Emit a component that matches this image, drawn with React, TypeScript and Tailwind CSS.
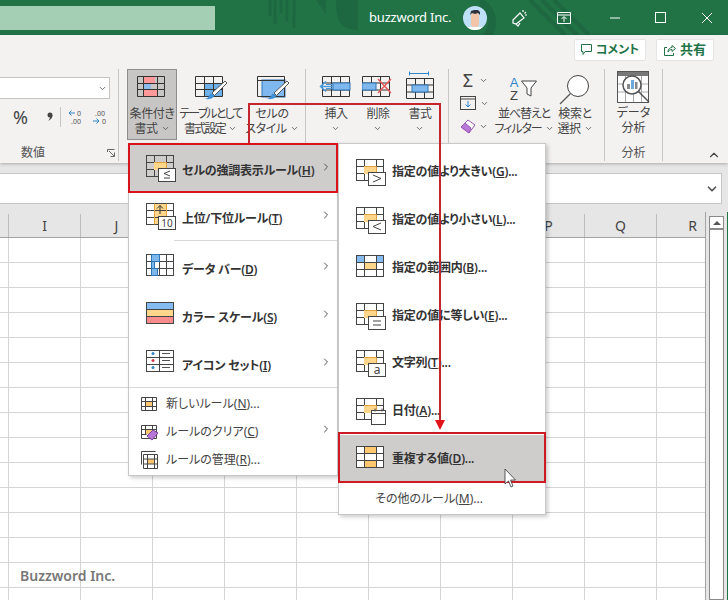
import { ReactNode } from 'react';
import { ChevronDown, ChevronRight, ChevronUp } from 'lucide-react';

const columns = ['', 'I', 'J', '', '', '', '', '', 'P', 'Q', 'R', ''];

function Chev({ className = '' }: { className?: string }) {
  return <ChevronDown className={`w-[9px] h-[9px] text-[#444] shrink-0 ${className}`} strokeWidth={2} />;
}

// grid used by the conditional formatting menu icons
function GridBase({ children }: { children?: ReactNode }) {
  return (
    <svg width={32} height={28} viewBox="0 0 32 28" className="shrink-0 relative top-[1px]">
      {children}
    </svg>
  );
}

function Lines({ cols = [8, 20], rows = [7, 14] }: { cols?: number[]; rows?: number[] }) {
  return (
    <g stroke="#444" strokeWidth="1" fill="none" shapeRendering="crispEdges">
      <rect x="0.5" y="0.5" width={27} height={21} />
      {cols.map((x) => (
        <line key={x} x1={x + 0.5} y1="0" x2={x + 0.5} y2={21} />
      ))}
      {rows.map((y) => (
        <line key={y} x1="0" y1={y + 0.5} x2={27} y2={y + 0.5} />
      ))}
    </g>
  );
}

function Badge({ children }: { children: ReactNode }) {
  return (
    <g>
      <rect x="12.5" y="13.5" width="17" height="13" fill="#fff" stroke="#444" />
      {children}
    </g>
  );
}

function Highlight() {
  return <rect x="8" y="7" width="12" height="8" fill="#ffd68a" />;
}

function IconLess() {
  return (
    <GridBase>
      <Lines />
      <Highlight />
      <path d="M8.500 7.500h12v7" stroke="#e0a040" fill="none" />
      <Badge>
        <path d="M24 16l-6 2.500 6 2.500M18 23h6" stroke="#444" fill="none" />
      </Badge>
    </GridBase>
  );
}

function IconTop() {
  return (
    <GridBase>
      <rect x="8" y="0" width="12" height="21" fill="#ffd68a" />
      <Lines />
      <path d="M8.500 .5v21M20.500 .5v21" stroke="#e0a040" />
      <path d="M14 11V2.500M11 5.500l3-3 3 3" stroke="#333" fill="none" />
      <Badge>
        <text x="21" y="24" textAnchor="middle" fontSize="10" fill="#444">
          10
        </text>
      </Badge>
    </GridBase>
  );
}

function IconBar() {
  return (
    <GridBase>
      <Lines cols={[5, 13, 20]} />
      <rect x="5.500" y=".5" width="8" height="7" fill="#7db7ec" stroke="#2e75b6" />
      <rect x="5.500" y="7.500" width="3" height="7" fill="#7db7ec" stroke="#2e75b6" />
      <rect x="5.500" y="14.500" width="6" height="7" fill="#7db7ec" stroke="#2e75b6" />
    </GridBase>
  );
}

function IconScale() {
  return (
    <GridBase>
      <rect x="0" y="0" width="27" height="7" fill="#84bbf0" />
      <rect x="0" y="7" width="27" height="7" fill="#ffd68a" />
      <rect x="0" y="14" width="27" height="7" fill="#f98c8c" />
      <Lines cols={[]} />
    </GridBase>
  );
}

function IconSet() {
  return (
    <GridBase>
      <Lines cols={[13]} />
      <circle cx="7" cy="3.500" r="1.500" fill="#2e86c8" />
      <circle cx="7" cy="10.500" r="1.500" fill="#d8394a" />
      <circle cx="7" cy="17.500" r="1.500" fill="#2e86c8" />
      <path d="M16 3.500h8M16 10.500h8M16 17.500h8" stroke="#555" />
    </GridBase>
  );
}

function IconValue({ kind }: { kind: 'gt' | 'lt' | 'eq' | 'a' | 'date' }) {
  return (
    <GridBase>
      <Lines />
      <Highlight />
      <path d="M8.500 7.500h12v7" stroke="#e0a040" fill="none" />
      {kind === 'date' ? (
        <g>
          <rect x="15.500" y="12.500" width="14" height="14" fill="#fff" stroke="#444" />
          <path d="M15.500 15.500h14M19 10.500v3M26 10.500v3" stroke="#444" fill="none" />
        </g>
      ) : (
        <Badge>
          {kind === 'gt' && <path d="M17 16l8 3.500-8 3.500" stroke="#444" fill="none" />}
          {kind === 'lt' && <path d="M25 16l-8 3.500 8 3.500" stroke="#444" fill="none" />}
          {kind === 'eq' && <path d="M17 18h8M17 22h8" stroke="#444" fill="none" />}
          {kind === 'a' && (
            <text x="21" y="24" textAnchor="middle" fontSize="12" fill="#444">
              a
            </text>
          )}
        </Badge>
      )}
    </GridBase>
  );
}

function IconRange() {
  return (
    <GridBase>
      <rect x="0" y="0" width="8" height="7" fill="#84bbf0" />
      <rect x="20" y="0" width="8" height="7" fill="#84bbf0" />
      <rect x="8" y="7" width="12" height="7" fill="#ffd68a" />
      <Lines />
    </GridBase>
  );
}

function IconDup() {
  return (
    <GridBase>
      <rect x="0.5" y="0.5" width="27" height="21" fill="#fff" />
      <rect x="8" y="0" width="12" height="7" fill="#ffc870" />
      <rect x="8" y="14" width="12" height="7" fill="#ffc870" />
      <Lines />
    </GridBase>
  );
}

function SmallGrid({ children }: { children?: ReactNode }) {
  return (
    <svg width="18" height="18" viewBox="0 0 18 18" className="shrink-0">
      {children}
    </svg>
  );
}

function SmallNew() {
  return (
    <SmallGrid>
      <rect x="5" y="6" width="6" height="6" fill="#ffc870" />
      <path d="M.5 2.500h15v13H.5zM4.500 2.500v13M11.500 2.500v13M.5 6.500h15M.5 11.500h15" stroke="#444" fill="none" />
    </SmallGrid>
  );
}

function SmallClear() {
  return (
    <SmallGrid>
      <rect x="5" y="6" width="6" height="5" fill="#ffc870" />
      <path d="M.5 2.500h15v13H.5zM4.500 2.500v9M11.500 2.500v4M.5 6.500h15M.5 11.500h5" stroke="#444" fill="none" />
      <path d="M6 13l6-6 5 3-6 7z" fill="#b878d8" stroke="#7a3f9e" />
    </SmallGrid>
  );
}

function SmallManage() {
  return (
    <SmallGrid>
      <rect x="7" y="8" width="6" height="5" fill="#ffc870" />
      <path d="M.5 .5h14M.5 .5v13" stroke="#444" fill="none" />
      <path d="M2.500 3.500h14v14h-14zM6.500 3.500v14M13.500 3.500v14M2.500 8h14M2.500 13h14" stroke="#444" fill="none" />
    </SmallGrid>
  );
}

function Brush() {
  return (
    <g>
      <path d="M30 6L17 18l2.500 2.500L32 8z" fill="#fff" stroke="#555" />
      <path d="M16 18.500c-2 1-2 3-3 4-1 1-3 1-4 1 2 1 7 1 9-1 1-1 1.500-2 1-2.500z" fill="#3f8fd6" />
    </g>
  );
}

function IconConditional() {
  return (
    <svg width="30" height="24" viewBox="0 0 30 24">
      <rect x="6" y="1" width="12" height="7" fill="#f99" />
      <rect x="6" y="8" width="8" height="7" fill="#8cbcec" />
      <rect x="6" y="15" width="14" height="7" fill="#f99" />
      <path d="M.5 1.500h27v20H.5zM6.500 1.500v20M20.500 1.500v20M.5 8.500h27M.5 14.500h27" stroke="#333" fill="none" />
    </svg>
  );
}

function IconTable() {
  return (
    <svg width="34" height="28" viewBox="0 0 34 28">
      <rect x="9" y="8" width="18" height="13" fill="#6fb0e8" />
      <path d="M.5 1.500h27v20H.5zM9.500 1.500v20M18.500 1.500v20M.5 8.500h27M.5 14.500h27" stroke="#333" fill="none" />
      <Brush />
    </svg>
  );
}

function IconCellStyle() {
  return (
    <svg width="34" height="28" viewBox="0 0 34 28">
      <rect x="5" y="5" width="23" height="17" fill="#7fb8ee" stroke="#2e75b6" />
      <path d="M.5 1.500h27v20H.5zM.5 5.500h27" stroke="#333" fill="none" />
      <Brush />
    </svg>
  );
}

function IconInsert() {
  return (
    <svg width="34" height="22" viewBox="0 0 34 22">
      <path d="M3.500 .5h27v20h-27zM12.500 .5v20M21.500 .5v20M3.500 7h27M3.500 14h27" stroke="#333" fill="none" />
      <rect x="14" y="7" width="17" height="7" fill="#7fb8ee" stroke="#2e75b6" />
      <path d="M14 10.500H2M7 5.500l-5.500 5 5.500 5" stroke="#4a9adf" strokeWidth="1.500" fill="none" />
      <path d="M7 8.500h7M7 12.500h7" stroke="#4a9adf" />
    </svg>
  );
}

function IconDelete() {
  return (
    <svg width="32" height="22" viewBox="0 0 32 22">
      <path d="M.5 .5h27v20H.5zM9.500 .5v20M18.500 .5v20M.5 7h27M.5 14h27" stroke="#333" fill="none" />
      <rect x="0" y="7" width="14" height="7" fill="#7fb8ee" stroke="#2e75b6" />
      <path d="M16 3l13 14M29 3L16 17" stroke="#e85a5a" strokeWidth="1.500" fill="none" />
    </svg>
  );
}

function IconFormat() {
  return (
    <svg width="30" height="28" viewBox="0 0 30 28">
      <path d="M4.500 2.500h19M4.500 .5v4M23.500 .5v4" stroke="#2e86c8" fill="none" />
      <path d="M1.500 7.500h27v20h-27zM10.500 7.500v20M19.500 7.500v20M1.500 14h27M1.500 21h27" stroke="#333" fill="none" />
      <rect x="7" y="14" width="16" height="7" fill="#7fb8ee" stroke="#2e75b6" />
    </svg>
  );
}

function IconSort() {
  return (
    <svg width="32" height="26" viewBox="0 0 32 26">
      <text x="6" y="12" textAnchor="middle" fontSize="13" fill="#2e86c8" fontFamily="Liberation Sans">
        A
      </text>
      <text x="6" y="25" textAnchor="middle" fontSize="13" fill="#444" fontFamily="Liberation Sans">
        Z
      </text>
      <path d="M13.500 6h15l-5.500 7v8l-4 -2v-6z" fill="#fff" stroke="#444" />
    </svg>
  );
}

function IconSearch() {
  return (
    <svg width="32" height="30" viewBox="0 0 32 30">
      <circle cx="19" cy="11" r="10.500" fill="#fff" stroke="#444" />
      <path d="M11.500 18.500L1 29" stroke="#555" strokeWidth="1.300" />
    </svg>
  );
}

function IconAnalyze() {
  return (
    <svg width="34" height="34" viewBox="0 0 34 34">
      <rect x=".5" y=".5" width="31" height="31" fill="#fff" stroke="#555" />
      <rect x="1" y="1" width="30" height="4" fill="#777" />
      <path d="M8.500 5v26M16.500 5v26M24.500 5v26M1 13h30M1 21h30" stroke="#aaa" />
      <circle cx="15" cy="14" r="9" fill="#fff" stroke="#555" strokeWidth="1.500" />
      <rect x="10" y="13" width="3" height="5" fill="#888" />
      <rect x="14" y="9" width="3" height="9" fill="#6fa8dc" />
      <rect x="18" y="11" width="2.500" height="7" fill="#888" />
      <path d="M21 20l11 11" stroke="#555" strokeWidth="1.500" />
    </svg>
  );
}

function RibbonButton({
  width,
  icon,
  lines,
  chevOwnLine,
  active,
  tracking = 'tracking-[-0.4px]',
}: {
  width: string;
  icon: ReactNode;
  lines: string[];
  chevOwnLine?: boolean;
  active?: boolean;
  tracking?: string;
}) {
  return (
    <div
      className={`${width} h-[71px] flex flex-col items-center border ${
        active ? 'bg-[#c8c6c4] border-[#8e8e8e]' : 'border-transparent'
      }`}
    >
      <div className="h-[36px] pt-[5px] flex items-start justify-center">{icon}</div>
      <div className={`text-[12px] leading-[15px] text-[#444] text-center whitespace-nowrap ${tracking}`}>
        <div>{lines[0]}</div>
        {chevOwnLine ? (
          <div className="flex justify-center h-[15px] items-center">
            <Chev />
          </div>
        ) : (
          <div className="flex justify-center items-center gap-[3px]">
            {lines[1]}
            <Chev />
          </div>
        )}
      </div>
    </div>
  );
}

function GroupLabel({ children }: { children: ReactNode }) {
  return <div className="text-[12px] leading-[16px] text-[#555] text-center">{children}</div>;
}

function MenuRow({
  icon,
  label,
  accel,
  tail = '',
  arrow,
  selected,
  textTop = 'top-[3px]',
}: {
  icon: ReactNode;
  label: string;
  accel: string;
  tail?: string;
  arrow?: boolean;
  selected?: boolean;
  textTop?: string;
}) {
  return (
    <div className={`h-[48px] pl-[17px] gap-[4px] flex items-center relative ${selected ? 'bg-[#cfcdcc]' : ''}`}>
      {icon}
      <span className={`relative ${textTop} text-[12px] font-semibold tracking-[-0.2px] text-[#333] whitespace-nowrap`}>
        {label}(<span className="underline">{accel}</span>){tail}
      </span>
      {arrow && <ChevronRight className="absolute right-[5px] top-[17px] w-[12px] h-[12px] text-[#555]" />}
    </div>
  );
}

function MenuRowSmall({
  icon,
  label,
  accel,
  tail = '',
  arrow,
}: {
  icon: ReactNode;
  label: string;
  accel: string;
  tail?: string;
  arrow?: boolean;
}) {
  return (
    <div className="h-[28px] pl-[12px] gap-[7px] flex items-center relative">
      {icon}
      <span className="text-[12px] text-[#444] whitespace-nowrap">
        {label}(<span className="underline">{accel}</span>){tail}
      </span>
      {arrow && <ChevronRight className="absolute right-[5px] top-[5px] w-[12px] h-[12px] text-[#555]" />}
    </div>
  );
}

export default function App() {
  return (
    <div className="w-[728px] h-[600px] relative overflow-hidden bg-[#e6e6e6] [font-family:'Noto_Sans','Noto_Sans_CJK_JP',sans-serif] [font-feature-settings:'palt']">
      {/* Title bar */}
      <header className="h-[35px] bg-[#217346] relative flex items-center text-white">
        <svg width="100" height="35" viewBox="0 0 100 35" className="absolute left-[268px] top-0">
          <path d="M2 0v16M7 0v24M13 0v14M19 0v22M26 0v28" stroke="#1d6840" strokeWidth="3" />
          <path d="M48 0l10 14V0zM68 0c0 20 4 30 22 30V0z" fill="#1d6840" />
        </svg>
        <svg width="150" height="35" viewBox="0 0 150 35" className="absolute left-[480px] top-0">
          <circle cx="-10" cy="22" r="22" stroke="#1d6840" strokeWidth="8" fill="none" />
          <path d="M50 0l35 35M62 0l35 35M74 0l35 35" stroke="#1d6840" strokeWidth="4" />
        </svg>
        <div className="w-[215px] h-[24px] bg-[#a5cfb4] shrink-0 relative" />
        <span className="ml-[154px] text-[13px] tracking-[-0.2px] relative">buzzword Inc.</span>
        <svg width="24" height="24" viewBox="0 0 24 24" className="ml-[12px] relative">
          <clipPath id="av">
            <circle cx="12" cy="12" r="12" />
          </clipPath>
          <g clipPath="url(#av)">
            <rect width="24" height="24" fill="#bfe1f7" />
            <rect x="4" y="21" width="16" height="4" fill="#fff" />
            <rect x="8" y="7" width="8" height="14" rx="3" fill="#f2c4a8" />
            <path d="M7 9l1-4 3-1 4 0 2 2 0 3-2-2-3 1-3-1z" fill="#33333b" />
          </g>
        </svg>
        <svg width="18" height="18" viewBox="0 0 18 18" className="ml-[23px] relative" fill="none" stroke="#fff" strokeWidth="1.200">
          <path d="M3 11l7-7 4 5-8 6-3-1zM6 15l2 2 2-3" />
          <path d="M13 1v2M16 3l-1.500 1.500M17 6h-2" />
        </svg>
        <svg width="14" height="12" viewBox="0 0 14 12" className="ml-[29px] relative" fill="none" stroke="#fff">
          <path d="M.5 .5h13v11H.5zM.5 3h13M7 10V5M4.500 7L7 4.500 9.500 7" />
        </svg>
        <svg width="12" height="2" viewBox="0 0 12 2" className="ml-[38px] relative">
          <path d="M1 1h10" stroke="#fff" />
        </svg>
        <svg width="11" height="11" viewBox="0 0 11 11" className="ml-[34px] relative">
          <rect x=".5" y=".5" width="10" height="10" stroke="#fff" fill="none" />
        </svg>
        <svg width="12" height="12" viewBox="0 0 12 12" className="ml-[35px] relative">
          <path d="M1 1l10 10M11 1L1 11" stroke="#fff" />
        </svg>
      </header>

      {/* Ribbon */}
      <section className="h-[128px] bg-[#f3f2f1] flex flex-col shadow-[0_1px_3px_rgba(0,0,0,0.25)] relative">
        <div className="h-[34px] flex items-start justify-end gap-[10px] pt-[4px] pr-[14px]">
          <div className="w-[72px] h-[22px] bg-white border border-[#e4e4e4] rounded-[2px] flex items-center justify-center gap-[4px] text-[12px] font-semibold text-[#217346]">
            <svg width="11" height="12" viewBox="0 0 11 12" fill="none" stroke="#217346">
              <path d="M.5 .5h10v7H4L2 10.500V7.500H.5z" />
            </svg>
            コメント
          </div>
          <div className="w-[58px] h-[22px] bg-white border border-[#e4e4e4] rounded-[2px] flex items-center justify-center gap-[4px] text-[13px] font-semibold text-[#217346]">
            <svg width="12" height="12" viewBox="0 0 12 12" fill="none" stroke="#217346">
              <path d="M3 3.500H.5v8h9V9M4 8c0-3 2-4.500 4-4.500V1.500l3.500 3-3.500 3V5.500C6 5.500 5 6.500 4 8z" />
            </svg>
            共有
          </div>
        </div>
        <div className="h-[94px] flex">
          {/* 数値 */}
          <div className="w-[119px] h-[92px] border-r border-[#c8c6c4] relative flex flex-col">
            <div className="w-[110px] h-[23px] mt-[8px] bg-white border border-[#c8c6c4] border-l-0 flex items-center justify-end pr-[2px]">
              <Chev />
            </div>
            <div className="h-[36px] flex items-center text-[#444] pl-[13px]">
              <span className="text-[18px] w-[25px] leading-none">%</span>
              <svg width="22" height="16" viewBox="0 0 22 16" className="shrink-0">
                <circle cx="12" cy="6" r="2.500" fill="#444" />
                <path d="M14.500 6c0 3-2 5-4.500 6 1.500-1.500 2-3 2-4z" fill="#444" />
              </svg>
              <span className="w-px h-[20px] bg-[#c8c6c4] mr-[7px]" />
              <svg width="16" height="16" viewBox="0 0 16 16" className="mr-[8px]">
                <path d="M7 4H1M3.500 1.500L1 4l2.500 2.500" stroke="#2e86c8" fill="none" />
                <text x="11" y="7" fontSize="7" textAnchor="middle" fill="#555">
                  0
                </text>
                <text x="8" y="15" fontSize="7" textAnchor="middle" fill="#555">
                  .00
                </text>
              </svg>
              <svg width="16" height="16" viewBox="0 0 16 16">
                <text x="8" y="7" fontSize="7" textAnchor="middle" fill="#555">
                  .00
                </text>
                <path d="M1 12h6M4.500 9.500L7 12l-2.500 2.500" stroke="#2e86c8" fill="none" />
                <text x="12" y="15" fontSize="7" textAnchor="middle" fill="#555">
                  0
                </text>
              </svg>
            </div>
            <div className="mt-[11px]">
              <div className="w-[66px] text-center">
                <GroupLabel>数値</GroupLabel>
              </div>
            </div>
            <svg width="8" height="8" viewBox="0 0 8 8" className="absolute left-[107px] top-[80px]" fill="none" stroke="#666">
              <path d="M.5 3V.5H7.500M2 2l5 5M7.500 3.500v4H3.500" />
            </svg>
          </div>
          {/* スタイル */}
          <div className="w-[187px] h-[92px] border-r border-[#c8c6c4] flex pl-[8px]">
            <RibbonButton width="w-[50px]" active icon={<IconConditional />} lines={['条件付き', '書式']} />
            <RibbonButton
              width="w-[67px]"
              tracking="tracking-[-1.8px]"
              icon={<div className="ml-[3px]"><IconTable /></div>}
              lines={['テーブルとして', '書式設定']}
            />
            <RibbonButton width="w-[56px]" icon={<div className="ml-[3px]"><IconCellStyle /></div>} lines={['セルの', 'スタイル']} />
          </div>
          {/* セル */}
          <div className="w-[143px] h-[92px] border-r border-[#c8c6c4] flex pl-[9px]">
            <RibbonButton width="w-[42px]" chevOwnLine icon={<div className="mt-[1px]"><IconInsert /></div>} lines={['挿入']} />
            <RibbonButton width="w-[42px]" chevOwnLine icon={<div className="mt-[1px]"><IconDelete /></div>} lines={['削除']} />
            <RibbonButton width="w-[42px]" chevOwnLine icon={<div className="-mt-[4px]"><IconFormat /></div>} lines={['書式']} />
          </div>
          {/* 編集 */}
          <div className="w-[156px] h-[92px] border-r border-[#c8c6c4] flex">
            <div className="w-[47px] pl-[11px] pt-[2px] flex flex-col gap-[5px]">
              <div className="h-[18px] flex items-center gap-[3px]">
                <span className="text-[18px] leading-none text-[#444] w-[16px] text-center">Σ</span>
                <Chev />
              </div>
              <div className="h-[18px] flex items-center gap-[4px]">
                <svg width="16" height="14" viewBox="0 0 16 14" fill="none">
                  <rect x=".5" y=".5" width="15" height="13" stroke="#444" />
                  <path d="M.5 3h15" stroke="#444" />
                  <path d="M8 5v6M5.500 8.500L8 11l2.500-2.500" stroke="#2e86c8" />
                </svg>
                <Chev />
              </div>
              <div className="h-[18px] flex items-center gap-[3px]">
                <svg width="16" height="16" viewBox="0 0 16 16">
                  <path d="M1 9l7-7 7 5-6 8z" fill="#fff" stroke="#9b59b6" />
                  <path d="M1 9l4-4 6 5-2 5z" fill="#b878d8" stroke="#9b59b6" />
                </svg>
                <Chev />
              </div>
            </div>
            <RibbonButton width="w-[56px]" tracking="tracking-[-1.1px]" icon={<IconSort />} lines={['並べ替えと', 'フィルター']} />
            <RibbonButton width="w-[46px]" icon={<IconSearch />} lines={['検索と', '選択']} />
          </div>
          {/* 分析 */}
          <div className="w-[58px] h-[92px] border-r border-[#c8c6c4] flex flex-col items-center">
            <div className="h-[36px] pt-[2px]">
              <IconAnalyze />
            </div>
            <div className="text-[12px] leading-[15px] text-[#444] text-center">
              <div>データ</div>
              <div>分析</div>
            </div>
            <div className="mt-[10px]">
              <GroupLabel>分析</GroupLabel>
            </div>
          </div>
          <div className="flex-1 flex items-end justify-end pr-[7px] pb-[1px]">
            <ChevronUp className="w-[14px] h-[14px] text-[#444]" />
          </div>
        </div>
      </section>

      {/* Formula bar */}
      <div className="h-[49px] pt-[10px] pr-[6px]">
        <div className="h-[31px] bg-white border border-[#c6c6c6] border-l-0 flex items-center justify-end pr-[2px]">
          <ChevronDown className="w-[14px] h-[14px] text-[#555]" strokeWidth={3} />
        </div>
      </div>

      {/* Sheet */}
      <div className="flex h-[388px]">
        <div className="w-[706px] shrink-0 overflow-hidden">
          <div className="h-[26px] w-[900px] grid grid-cols-[9px_repeat(11,72px)] border-b border-[#a3a3a3]">
            {columns.map((c, i) => (
              <div key={i} className="text-[14px] text-[#444] flex items-center justify-center border-r border-[#bdbdbd] mt-[2px]">
                {c}
              </div>
            ))}
          </div>
          <div className="w-[900px] grid grid-cols-[9px_repeat(11,72px)] bg-white">
            {Array.from({ length: 15 * 12 }).map((_, i) => (
              <div key={i} className="h-[25px] border-r border-b border-[#d4d4d4]" />
            ))}
          </div>
        </div>
        <div className="w-[4px] border-l border-[#a3a3a3] shrink-0 ml-[-1px]" />
        <div className="w-[15px] mt-[4px] border border-[#8a8a8a] bg-white shrink-0 flex flex-col">
          <div className="h-[13px] border-b-2 border-[#8a8a8a] flex items-center justify-center">
            <div className="w-0 h-0 border-x-[4px] border-x-transparent border-b-[4px] border-b-[#555]" />
          </div>
        </div>
        <div className="flex-1 flex justify-end">
          <div className="w-px bg-[#217346]" />
        </div>
      </div>

      {/* Watermark */}
      <div className="absolute left-[20px] top-[565px] text-[14px] font-semibold text-[#777]">Buzzword Inc.</div>

      {/* Conditional formatting menu */}
      <div className="absolute left-[128px] top-[143px] w-[210px] h-[333px] bg-white border border-[#c8c8c8] shadow-[2px_2px_4px_rgba(0,0,0,0.2)] flex flex-col">
        <MenuRow selected arrow icon={<IconLess />} label="セルの強調表示ルール" accel="H" />
        <MenuRow arrow icon={<IconTop />} label="上位/下位ルール" accel="T" />
        <div className="h-px bg-[#d8d8d8] ml-[45px] mb-[2px]" />
        <MenuRow arrow icon={<IconBar />} label="データ バー" accel="D" />
        <MenuRow arrow icon={<IconScale />} label="カラー スケール" accel="S" />
        <MenuRow arrow icon={<IconSet />} label="アイコン セット" accel="I" />
        <div className="h-px bg-[#d8d8d8] mb-[2px]" />
        <MenuRowSmall icon={<SmallNew />} label="新しいルール" accel="N" tail="..." />
        <MenuRowSmall arrow icon={<SmallClear />} label="ルールのクリア" accel="C" />
        <MenuRowSmall icon={<SmallManage />} label="ルールの管理" accel="R" tail="..." />
      </div>

      {/* Highlight rules submenu */}
      <div className="absolute left-[338px] top-[143px] w-[208px] h-[372px] bg-white border border-[#c8c8c8] shadow-[2px_2px_4px_rgba(0,0,0,0.2)] flex flex-col pt-[4px]">
        <MenuRow textTop="top-0" icon={<IconValue kind="gt" />} label="指定の値より大きい" accel="G" tail="..." />
        <MenuRow textTop="top-0" icon={<IconValue kind="lt" />} label="指定の値より小さい" accel="L" tail="..." />
        <MenuRow textTop="top-0" icon={<IconRange />} label="指定の範囲内" accel="B" tail="..." />
        <MenuRow textTop="top-0" icon={<IconValue kind="eq" />} label="指定の値に等しい" accel="E" tail="..." />
        <MenuRow textTop="top-0" icon={<IconValue kind="a" />} label="文字列" accel="T" tail="..." />
        <MenuRow textTop="top-0" icon={<IconValue kind="date" />} label="日付" accel="A" tail="..." />
        <MenuRow textTop="top-0" selected icon={<IconDup />} label="重複する値" accel="D" tail="..." />
        <div className="h-[31px] flex items-center pl-[36px] text-[12px] text-[#444]">
          その他のルール(<span className="underline">M</span>)...
        </div>
      </div>

      {/* Red annotations */}
      <div className="absolute left-[128px] top-[143px] w-[210px] h-[50px] border-2 border-[#d9131c]" />
      <div className="absolute left-[338px] top-[432px] w-[208px] h-[51px] border-2 border-[#cc1a22]" />
      <svg width="728" height="600" viewBox="0 0 728 600" className="absolute left-0 top-0 pointer-events-none">
        <path d="M249 143V104H440V422" stroke="#c4262e" strokeWidth="2" fill="none" />
        <path d="M435 420h10l-5 10z" fill="#e0141a" />
        <path d="M505 469v15l3.500-3 2.500 6 2-1-2.500-6h5z" fill="#fff" stroke="#333" strokeWidth="0.800" />
      </svg>
    </div>
  );
}
